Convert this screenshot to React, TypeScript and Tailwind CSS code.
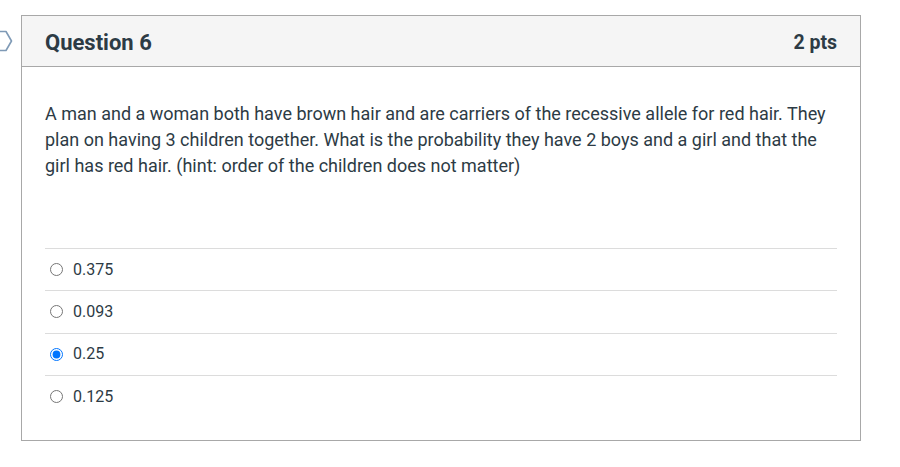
const answers = [
  { label: '0.375', checked: false },
  { label: '0.093', checked: false },
  { label: '0.25', checked: true },
  { label: '0.125', checked: false },
]

export default function App() {
  return (
    <div
      className="min-h-screen bg-white text-[#2d3b45]"
      style={{ fontFamily: 'Roboto, "Liberation Sans", sans-serif' }}
    >
      <div className="flex items-start pt-[15px]">
        {/* question flag */}
        <div className="w-[21px] shrink-0 pt-[15px]">
          <svg width="14" height="22" viewBox="0 0 14 22" fill="none">
            <path
              d="M-4 1.5 H6 L11.5 11 L6 20.5 H-4"
              stroke="#7f9ab6"
              strokeWidth="1.6"
              strokeLinejoin="round"
            />
          </svg>
        </div>

        <div className="w-[840px] border border-[#a8a8a8]">
          {/* header */}
          <div className="flex items-center justify-between h-[51px] pt-[3px] px-[23px] bg-[#f5f5f5] border-b border-[#a8a8a8]">
            <h2 className="text-[22px] font-bold">Question 6</h2>
            <span className="text-[19.5px] font-bold">2 pts</span>
          </div>

          {/* body */}
          <div className="px-[23px] pt-[34px] pb-[23px]">
            <p className="text-[18px] leading-[26px]">
              A man and a woman both have brown hair and are carriers of the recessive allele for red hair. They
              plan on having 3 children together. What is the probability they have 2 boys and a girl and that the
              girl has red hair. (hint: order of the children does not matter)
            </p>

            <div className="mt-[69px]">
              {answers.map((a) => (
                <label
                  key={a.label}
                  className="flex items-center h-[42.3px] border-t border-[#dcdcdc] text-[16px]"
                >
                  <input
                    type="radio"
                    name="q6"
                    defaultChecked={a.checked}
                    className="ml-[5px] mr-[10px] w-[13px] h-[13px]"
                  />
                  <span>{a.label}</span>
                </label>
              ))}
            </div>
          </div>
        </div>
      </div>
    </div>
  )
}
